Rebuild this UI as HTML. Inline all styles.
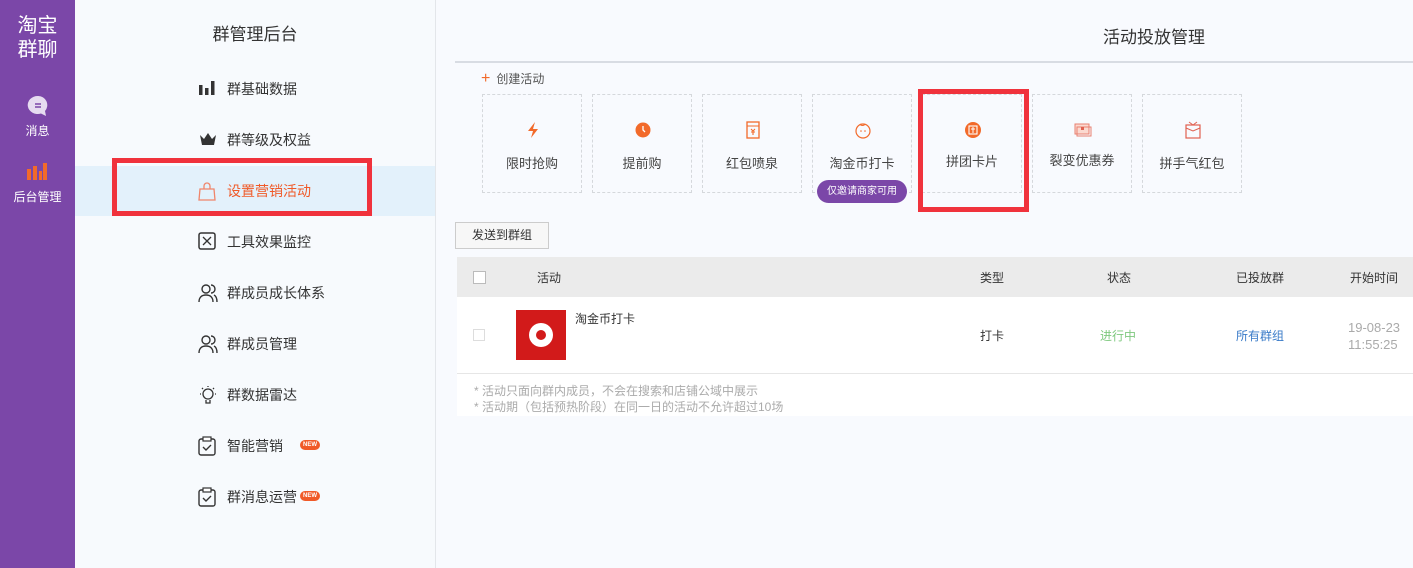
<!DOCTYPE html>
<html><head><meta charset="utf-8"><style>
*{margin:0;padding:0;box-sizing:border-box}
body{width:1413px;height:568px;position:relative;overflow:hidden;background:#f8fafe;font-family:"Liberation Sans","Noto Sans CJK SC",sans-serif;color:#333}
.a{position:absolute}
.side{left:0;top:0;width:75px;height:568px;background:#7b47a8;color:#fff;text-align:center}
.lp{left:75px;top:0;width:361px;height:568px;background:#f7fafd;border-right:1px solid #e3e6ea}
.mi{left:0;width:360px;height:50px;font-size:14px;color:#333}
.mi span{position:absolute;left:152px;top:15px}
.mi i{position:absolute;left:123px;top:15px;width:20px;height:20px}
.card{top:94px;width:100px;height:99px;border:1px dashed #d5d8dc;font-size:13px;color:#444;text-align:center}
.card .ic{position:absolute;left:41px;top:26px;width:18px;height:18px}
.card .t{position:absolute;left:0;right:0;top:58px}
th,td{font-weight:normal}
.hd{left:457px;top:257px;width:956px;height:40px;background:#ebebeb;font-size:12px;color:#333}
.row{left:457px;top:297px;width:956px;height:77px;background:#fff;border-bottom:1px solid #e6e6e6;font-size:12px}
</style></head><body>
<div class="a side">
 <div class="a" style="left:0;width:75px;top:14px;font-size:20px;line-height:24px">淘宝<br>群聊</div>
 <svg class="a" style="left:27px;top:95px" width="22" height="22" viewBox="0 0 22 22"><path d="M11 1a10 9 0 1 0 3 17.5L19 21l-1-5A9 9 0 0 0 11 1z" fill="#e6dcf0"/><path d="M8 9h6M8 12h6" stroke="#7b47a8" stroke-width="1.5"/></svg>
 <div class="a" style="left:0;width:75px;top:122px;font-size:12px">消息</div>
 <svg class="a" style="left:27px;top:162px" width="20" height="18"><rect x="0" y="7" width="4" height="11" fill="#f26a2a"/><rect x="6" y="4" width="4" height="14" fill="#f26a2a"/><rect x="12" y="9" width="3" height="9" fill="#f26a2a"/><rect x="16" y="1" width="4" height="17" fill="#f26a2a"/></svg>
 <div class="a" style="left:0;width:75px;top:188px;font-size:12px">后台管理</div>
</div>
<div class="a lp">
 <div class="a" style="left:0;width:360px;top:20px;text-align:center;font-size:17px;color:#333">群管理后台</div>
 <div class="a" style="left:0;top:166px;width:360px;height:50px;background:#e3f1fb"></div>
 <div class="a mi" style="top:64px"><i><svg width="18" height="18"><rect x="1" y="6" width="3.5" height="10" fill="#333"/><rect x="7" y="9" width="3.5" height="7" fill="#333"/><rect x="13" y="2" width="3.5" height="14" fill="#333"/></svg></i><span>群基础数据</span></div>
 <div class="a mi" style="top:115px"><i><svg width="20" height="18"><path d="M2 5l4 4 4-6 4 6 4-4-2 10H4z" fill="#333"/></svg></i><span>群等级及权益</span></div>
 <div class="a mi" style="top:166px;color:#f05a28"><i><svg width="18" height="20"><path d="M2 8h14l1 11H1z M6 8V5a3 3 0 0 1 6 0v3" fill="none" stroke="#f0856a" stroke-width="1.3"/></svg></i><span>设置营销活动</span></div>
 <div class="a mi" style="top:217px"><i><svg width="18" height="18"><rect x="1" y="1" width="16" height="16" rx="2" fill="none" stroke="#333" stroke-width="1.5"/><path d="M5 5l8 8M13 5l-8 8" stroke="#333" stroke-width="1.3"/></svg></i><span>工具效果监控</span></div>
 <div class="a mi" style="top:268px"><i><svg width="20" height="20"><circle cx="8" cy="6" r="4" fill="none" stroke="#333" stroke-width="1.4"/><path d="M1 19c0-5 3-7 7-7s7 2 7 7M13 2a4 4 0 0 1 0 8M16 12c2 1 3 3 3 7" fill="none" stroke="#333" stroke-width="1.4"/></svg></i><span>群成员成长体系</span></div>
 <div class="a mi" style="top:319px"><i><svg width="20" height="20"><circle cx="8" cy="6" r="4" fill="none" stroke="#333" stroke-width="1.4"/><path d="M1 19c0-5 3-7 7-7s7 2 7 7M13 2a4 4 0 0 1 0 8M16 12c2 1 3 3 3 7" fill="none" stroke="#333" stroke-width="1.4"/></svg></i><span>群成员管理</span></div>
 <div class="a mi" style="top:370px"><i><svg width="20" height="20"><circle cx="10" cy="9" r="5" fill="none" stroke="#333" stroke-width="1.3"/><path d="M8 15v3h4v-3M10 1v1M2 9h1M17 9h1M4 3l1 1M16 3l-1 1" stroke="#333" stroke-width="1.3" fill="none"/></svg></i><span>群数据雷达</span></div>
 <div class="a mi" style="top:421px"><i><svg width="18" height="20"><rect x="1" y="3" width="16" height="16" rx="2" fill="none" stroke="#333" stroke-width="1.4"/><rect x="5" y="1" width="8" height="4" fill="#fff" stroke="#333" stroke-width="1.2"/><path d="M5 11l3 3 5-5" fill="none" stroke="#333" stroke-width="1.4"/></svg></i><span>智能营销</span><b class="a" style="left:225px;top:19px;width:20px;height:10px;background:#f05a28;border-radius:5px;font-size:6px;color:#fff;text-align:center;line-height:10px">NEW</b></div>
 <div class="a mi" style="top:472px"><i><svg width="18" height="20"><rect x="1" y="3" width="16" height="16" rx="2" fill="none" stroke="#333" stroke-width="1.4"/><rect x="5" y="1" width="8" height="4" fill="#fff" stroke="#333" stroke-width="1.2"/><path d="M5 11l3 3 5-5" fill="none" stroke="#333" stroke-width="1.4"/></svg></i><span>群消息运营</span><b class="a" style="left:225px;top:19px;width:20px;height:10px;background:#f05a28;border-radius:5px;font-size:6px;color:#fff;text-align:center;line-height:10px">NEW</b></div>
</div>
<div class="a" style="left:112px;top:158px;width:260px;height:58px;border:5px solid #f0323c"></div>

<div class="a" style="left:1103px;top:23px;font-size:17px;color:#333">活动投放管理</div>
<div class="a" style="left:455px;top:61px;width:958px;height:2px;background:#d8dce3"></div>
<div class="a" style="left:481px;top:70px;font-size:12px;color:#555"><span style="color:#f26a2a;font-size:16px;margin-right:6px">+</span>创建活动</div>

<div class="a card" style="left:482px"><svg class="ic" viewBox="0 0 18 18"><path d="M11 1L4 10h5l-2 7 7-9H9z" fill="#f26a2a"/></svg><div class="t">限时抢购</div></div>
<div class="a card" style="left:592px"><svg class="ic" viewBox="0 0 18 18"><circle cx="9" cy="9" r="7.5" fill="#f26a2a"/><path d="M9 5v4l2 2" stroke="#fff" stroke-width="1.3" fill="none"/></svg><div class="t">提前购</div></div>
<div class="a card" style="left:702px"><svg class="ic" viewBox="0 0 18 18"><rect x="3" y="1" width="12" height="16" fill="none" stroke="#f26a2a" stroke-width="1.3"/><path d="M3 5h12M7 8l2 2 2-2M9 10v4M7 11h4" stroke="#f26a2a" stroke-width="1.1" fill="none"/></svg><div class="t">红包喷泉</div></div>
<div class="a card" style="left:812px"><svg class="ic" viewBox="0 0 18 18"><circle cx="9" cy="10" r="7" fill="none" stroke="#f26a2a" stroke-width="1.2"/><path d="M6 3c1 2 4 2 5 0" stroke="#f26a2a" fill="none"/><circle cx="7" cy="10" r=".8" fill="#f26a2a"/><circle cx="11" cy="10" r=".8" fill="#f26a2a"/></svg><div class="t">淘金币打卡</div></div>
<div class="a" style="left:817px;top:180px;width:90px;height:23px;background:#7b47a8;border-radius:12px;color:#fff;font-size:10px;text-align:center;line-height:23px">仅邀请商家可用</div>
<div class="a card" style="left:922px"><svg class="ic" viewBox="0 0 18 18"><circle cx="9" cy="9" r="8" fill="#f26a2a"/><rect x="5" y="5" width="8" height="8" fill="none" stroke="#fff" stroke-width="1.1"/><path d="M9 6v6M7 8h4" stroke="#fff"/></svg><div class="t" style="top:56px">拼团卡片</div></div>
<div class="a card" style="left:1032px"><svg class="ic" viewBox="0 0 18 18"><rect x="1" y="3" width="14" height="10" fill="#fbd9d0" stroke="#e88070"/><rect x="3" y="6" width="14" height="9" fill="none" stroke="#e88070"/><rect x="7" y="6" width="3" height="3" fill="#e06050"/></svg><div class="t" style="top:55px">裂变优惠券</div></div>
<div class="a card" style="left:1142px"><svg class="ic" viewBox="0 0 18 18"><rect x="2" y="4" width="14" height="13" fill="none" stroke="#e06050" stroke-width="1.2"/><path d="M2 7l7 3 7-3M5 1l4 3 4-3" stroke="#e06050" fill="none"/></svg><div class="t">拼手气红包</div></div>
<div class="a" style="left:918px;top:89px;width:111px;height:123px;border:5px solid #f0323c"></div>

<div class="a" style="left:455px;top:222px;width:94px;height:27px;border:1px solid #ccc;background:#f7f7f7;font-size:12px;text-align:center;line-height:25px">发送到群组</div>
<div class="a hd">
 <div class="a" style="left:16px;top:14px;width:13px;height:13px;border:1px solid #bbb;background:#fff"></div>
 <div class="a" style="left:80px;top:12px">活动</div>
 <div class="a" style="left:523px;top:12px">类型</div>
 <div class="a" style="left:650px;top:12px">状态</div>
 <div class="a" style="left:779px;top:12px">已投放群</div>
 <div class="a" style="left:893px;top:12px">开始时间</div>
</div>
<div class="a row">
 <div class="a" style="left:16px;top:32px;width:12px;height:12px;border:1px solid #ddd"></div>
 <div class="a" style="left:59px;top:13px;width:50px;height:50px;background:#d21a1a"><div class="a" style="left:13px;top:13px;width:24px;height:24px;border-radius:50%;background:#fff"></div><div class="a" style="left:20px;top:20px;width:10px;height:10px;border-radius:50%;background:#d21a1a"></div></div>
 <div class="a" style="left:118px;top:13px">淘金币打卡</div>
 <div class="a" style="left:523px;top:30px">打卡</div>
 <div class="a" style="left:643px;top:30px;color:#7ec87e">进行中</div>
 <div class="a" style="left:779px;top:30px;color:#3a7bc8">所有群组</div>
 <div class="a" style="left:891px;top:22px;color:#aaa;font-size:13px;line-height:17px">19-08-23<br>11:55:25</div>
</div>
<div class="a" style="left:457px;top:374px;width:956px;height:42px;background:#fff"></div>
<div class="a" style="left:474px;top:383px;font-size:12px;color:#aaa;line-height:16px">* 活动只面向群内成员，不会在搜索和店铺公域中展示<br>* 活动期（包括预热阶段）在同一日的活动不允许超过10场</div>
</body></html>
